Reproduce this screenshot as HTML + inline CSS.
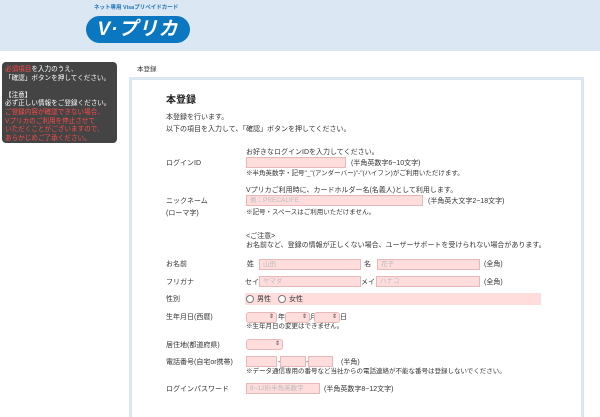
<!DOCTYPE html>
<html><head><meta charset="utf-8"><style>
*{margin:0;padding:0;box-sizing:border-box}
body{width:600px;height:400px;overflow:hidden;background:#fff;font-family:"Liberation Sans","Noto Sans CJK JP",sans-serif;color:#333;position:relative;font-size:7px}
.a{position:absolute;white-space:nowrap;line-height:1}
.hd{position:absolute;left:0;top:0;width:600px;height:51px;background:#dbe7f2}
.pill{position:absolute;left:86px;top:16px;width:104px;height:27px;border-radius:14px;background:#0b77c1;color:#fff;font-weight:bold;font-style:italic;font-size:19px;text-align:center;line-height:27px;letter-spacing:1px}
.side{position:absolute;left:2px;top:62px;width:115px;height:81px;background:#444;border-radius:4px;color:#fff;font-size:6.6px;line-height:8.6px;padding:4px 3px}
.r{color:#ff4a4a}
.box{position:absolute;left:129px;top:77px;width:455px;height:340px;border:3px solid #dae6f1;border-bottom:none}
.in{position:absolute;background:#fdd;border:1px solid #e8b8b8;height:11px;color:#bbb;font-size:6.5px;line-height:9px;padding-left:3px}
.sel::after{content:"⇕";position:absolute;right:2px;top:0;color:#444;font-size:6px}
.sel{border-radius:3px}
</style></head><body>
<div class="hd"></div>
<div class="a" style="left:94px;top:6px;font-size:5.5px;color:#1b72b8;font-weight:bold">ネット専用 Visaプリペイドカード</div>
<div class="pill">V·プリカ</div>
<div class="side"><span class="r">必須項目</span>を入力のうえ、<br>「確認」ボタンを押してください。<br><br>【注意】<br>必ず正しい情報をご登録ください。<br><span class="r">ご登録内容が確認できない場合、<br>Vプリカのご利用を停止させて<br>いただくことがございますので、<br>あらかじめご了承ください。</span></div>
<div class="a" style="left:137px;top:67px;font-size:6.5px">本登録</div>
<div class="box"></div>
<div class="a" style="left:166px;top:96px;font-size:10px;font-weight:bold;color:#222">本登録</div>
<div class="a" style="left:166px;top:114px">本登録を行います。</div>
<div class="a" style="left:166px;top:126px">以下の項目を入力して、「確認」ボタンを押してください。</div>

<div class="a" style="left:246px;top:149px">お好きなログインIDを入力してください。</div>
<div class="a" style="left:166px;top:160px">ログインID</div>
<div class="in" style="left:246px;top:157px;width:100px"></div>
<div class="a" style="left:351px;top:160px">(半角英数字6~10文字)</div>
<div class="a" style="left:246px;top:171px;font-size:6.5px">※半角英数字・記号"_"(アンダーバー)"-"(ハイフン)がご利用いただけます。</div>

<div class="a" style="left:246px;top:187px">Vプリカご利用時に、カードホルダー名(名義人)として利用します。</div>
<div class="a" style="left:166px;top:198px">ニックネーム</div>
<div class="in" style="left:246px;top:195px;width:177px">例：PRECALIFE</div>
<div class="a" style="left:428px;top:198px">(半角英大文字2~18文字)</div>
<div class="a" style="left:166px;top:210px">(ローマ字)</div>
<div class="a" style="left:246px;top:210px;font-size:6.5px">※記号・スペースはご利用いただけません。</div>

<div class="a" style="left:246px;top:233px">&lt;ご注意&gt;</div>
<div class="a" style="left:246px;top:242px">お名前など、登録の情報が正しくない場合、ユーザーサポートを受けられない場合があります。</div>

<div class="a" style="left:166px;top:261px">お名前</div>
<div class="a" style="left:247px;top:261px">姓</div>
<div class="in" style="left:259px;top:259px;width:102px">山田</div>
<div class="a" style="left:364px;top:261px">名</div>
<div class="in" style="left:377px;top:259px;width:103px">花子</div>
<div class="a" style="left:484px;top:261px">(全角)</div>

<div class="a" style="left:166px;top:279px">フリガナ</div>
<div class="a" style="left:245px;top:279px">セイ</div>
<div class="in" style="left:259px;top:276px;width:102px">ヤマダ</div>
<div class="a" style="left:361px;top:279px">メイ</div>
<div class="in" style="left:376px;top:276px;width:104px">ハナコ</div>
<div class="a" style="left:484px;top:279px">(全角)</div>

<div class="a" style="left:166px;top:296px">性別</div>
<div style="position:absolute;left:245px;top:293px;width:296px;height:12px;background:#fdd"></div>
<div style="position:absolute;left:246px;top:295px;width:8px;height:8px;border:1px solid #777;border-radius:50%;background:#fff"></div>
<div class="a" style="left:257px;top:296px">男性</div>
<div style="position:absolute;left:278px;top:295px;width:8px;height:8px;border:1px solid #777;border-radius:50%;background:#fff"></div>
<div class="a" style="left:289px;top:296px">女性</div>

<div class="a" style="left:166px;top:314px">生年月日(西暦)</div>
<div class="in sel" style="left:246px;top:312px;width:31px"></div><div class="a" style="left:278px;top:314px">年</div>
<div class="in sel" style="left:285px;top:312px;width:25px"></div><div class="a" style="left:310px;top:314px">月</div>
<div class="in sel" style="left:314px;top:312px;width:26px"></div><div class="a" style="left:340px;top:314px">日</div>
<div class="a" style="left:246px;top:324px;font-size:6.5px">※生年月日の変更はできません。</div>

<div class="a" style="left:166px;top:342px">居住地(都道府県)</div>
<div class="in sel" style="left:246px;top:339px;width:37px"></div>

<div class="a" style="left:166px;top:359px">電話番号(自宅or携帯)</div>
<div class="in" style="left:246px;top:356px;width:31px"></div><div class="a" style="left:278px;top:359px">-</div>
<div class="in" style="left:280px;top:356px;width:26px"></div><div class="a" style="left:306px;top:359px">-</div>
<div class="in" style="left:308px;top:356px;width:25px"></div>
<div class="a" style="left:341px;top:359px">(半角)</div>
<div class="a" style="left:246px;top:369px;font-size:6.5px">※データ通信専用の番号など当社からの電話連絡が不能な番号は登録しないでください。</div>

<div class="a" style="left:166px;top:386px">ログインパスワード</div>
<div class="in" style="left:246px;top:383px;width:74px">8~12桁半角英数字</div>
<div class="a" style="left:324px;top:386px">(半角英数字8~12文字)</div>
</body></html>
